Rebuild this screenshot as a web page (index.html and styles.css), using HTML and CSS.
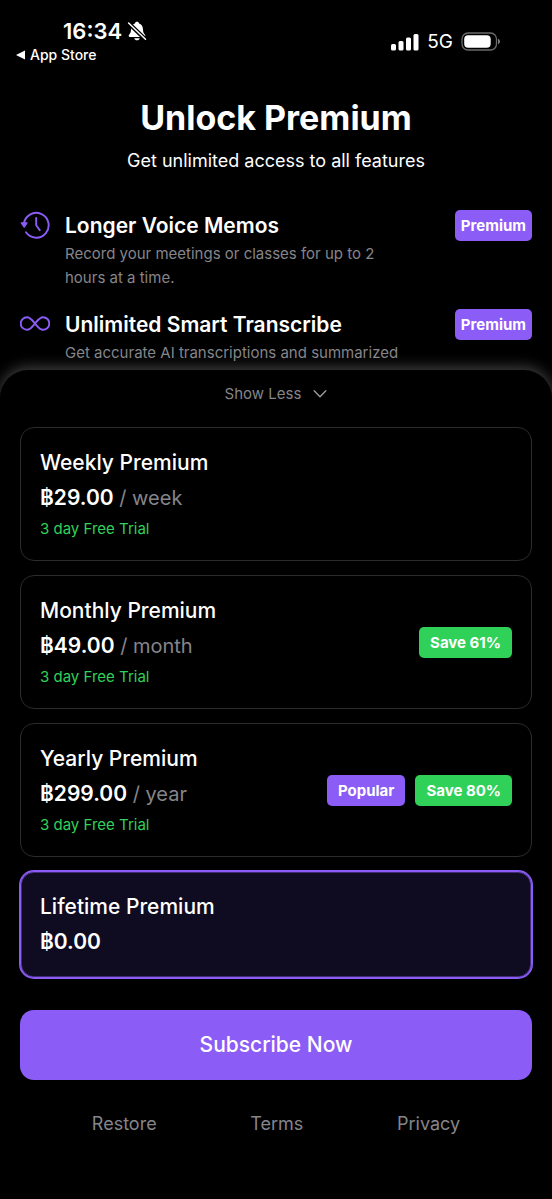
FILE: index.html
```html
<!DOCTYPE html>
<html lang="en">
<head>
<meta charset="utf-8">
<meta name="viewport" content="width=device-width, initial-scale=1">
<title>Unlock Premium</title>
<link rel="stylesheet" href="styles.css">
</head>
<body>
<div class="app">
  <header class="status">
    <div class="status-left">
      <div class="clock">
        <span>16:34</span>
        <svg class="bell" viewBox="0 0 20 20" aria-hidden="true">
          <path fill="#fff" d="M10 .8c1.1 0 1.9.7 2.1 1.6 2.4.8 3.7 2.8 3.8 5.4.1 3.300.7 4.400 2 5.900.9 1.100.4 2.200-.9 2.200H3c-1.300 0-1.800-1.100-.9-2.200 1.300-1.500 1.900-2.600 2-5.900.1-2.600 1.400-4.600 3.800-5.400C8.100 1.500 8.900.8 10 .8zM7.300 17.200h5.400c-.3 1.300-1.300 2.100-2.700 2.100s-2.400-.8-2.700-2.100z"/>
          <path stroke="#000" stroke-width="4.200" d="M1.200 1.700l17.400 16.800"/>
          <path stroke="#fff" stroke-width="1.500" stroke-linecap="round" d="M1.600 2l16.900 16.200"/>
        </svg>
      </div>
      <a class="back" href="#">
        <svg class="back-arrow" viewBox="0 0 9 10" aria-hidden="true"><path fill="#fff" d="M9 .4v9.200L0 5z"/></svg>
        App Store
      </a>
    </div>
    <div class="status-right">
      <svg class="signal" viewBox="0 0 28 18" aria-hidden="true">
        <g fill="#fff"><rect x="0" y="11" width="5" height="6.500" rx="1.500"/><rect x="7.500" y="8" width="5" height="9.500" rx="1.500"/><rect x="15" y="4.500" width="5" height="13" rx="1.500"/><rect x="22.500" y="1" width="5" height="16.500" rx="1.500"/></g>
      </svg>
      <span class="network">5G</span>
      <svg class="battery" viewBox="0 0 40 20" aria-hidden="true">
        <rect x="1" y="1" width="34.500" height="17" rx="6" fill="none" stroke="#6b6b6b" stroke-width="1.300"/>
        <rect x="3.200" y="3.200" width="26.500" height="12.600" rx="4" fill="#fff"/>
        <path fill="#7a7a7a" d="M37 6.700c1.400.6 2 1.600 2 2.800s-.6 2.200-2 2.800z"/>
      </svg>
    </div>
  </header>

  <main class="main">
    <div class="intro">
      <h1 class="title">Unlock Premium</h1>
      <p class="subtitle">Get unlimited access to all features</p>
    </div>

    <ul class="features">
      <li class="feature">
        <svg class="feature-icon" viewBox="0 0 30 30" aria-hidden="true">
          <g fill="none" stroke="#8b5cf6" stroke-width="1.900" stroke-linecap="round" stroke-linejoin="round">
            <path d="M3.900 14A12.400 12.400 0 1 1 6 22.300"/>
            <path d="M16.200 8v7.200l3.600 5"/>
          </g>
          <path fill="#8b5cf6" stroke="#8b5cf6" stroke-linejoin="round" d="M.9 12.800h6.400L4.200 17.600z"/>
        </svg>
        <div class="feature-text">
          <h2 class="feature-name">Longer Voice Memos</h2>
          <p class="feature-note">Record your meetings or classes for up to 2 hours at a time.</p>
        </div>
        <span class="badge badge-feature">Premium</span>
      </li>
      <li class="feature">
        <svg class="feature-icon" viewBox="0 0 30 30" aria-hidden="true">
          <path fill="none" stroke="#8b5cf6" stroke-width="1.900" d="M15 14.500c-2.900-3.500-4.800-6.300-8-6.300a6.300 6.300 0 0 0 0 12.600c3.200 0 5.100-2.800 8-6.300s4.800-6.300 8-6.300a6.300 6.300 0 0 1 0 12.600c-3.200 0-5.100-2.800-8-6.300z"/>
        </svg>
        <div class="feature-text">
          <h2 class="feature-name">Unlimited Smart Transcribe</h2>
          <p class="feature-note">Get accurate AI transcriptions and summarized</p>
        </div>
        <span class="badge badge-feature">Premium</span>
      </li>
    </ul>
  </main>

  <form class="sheet">
    <button class="toggle" type="button">
      Show Less
      <svg class="chevron" viewBox="0 0 14 10" aria-hidden="true"><path fill="none" stroke="#98989f" stroke-width="1.400" stroke-linecap="round" stroke-linejoin="round" d="M1.200 1.800L7 7.800l5.800-6"/></svg>
    </button>

    <div class="plans">
      <label class="plan">
        <input class="plan-radio" type="radio" name="plan" value="weekly">
        <span class="plan-info">
          <span class="plan-name">Weekly Premium</span>
          <span class="plan-price"><b>฿29.00</b> / week</span>
          <span class="plan-trial">3 day Free Trial</span>
        </span>
      </label>
      <label class="plan">
        <input class="plan-radio" type="radio" name="plan" value="monthly">
        <span class="plan-info">
          <span class="plan-name">Monthly Premium</span>
          <span class="plan-price"><b>฿49.00</b> / month</span>
          <span class="plan-trial">3 day Free Trial</span>
        </span>
        <span class="badge badge-save">Save 61%</span>
      </label>
      <label class="plan">
        <input class="plan-radio" type="radio" name="plan" value="yearly">
        <span class="plan-info">
          <span class="plan-name">Yearly Premium</span>
          <span class="plan-price"><b>฿299.00</b> / year</span>
          <span class="plan-trial">3 day Free Trial</span>
        </span>
        <span class="badge">Popular</span>
        <span class="badge badge-save">Save 80%</span>
      </label>
      <label class="plan">
        <input class="plan-radio" type="radio" name="plan" value="lifetime" checked>
        <span class="plan-info">
          <span class="plan-name">Lifetime Premium</span>
          <span class="plan-price"><b>฿0.00</b></span>
        </span>
      </label>
    </div>

    <div class="actions">
      <button class="subscribe" type="submit">Subscribe Now</button>
      <nav class="links">
        <a href="#">Restore</a>
        <a href="#">Terms</a>
        <a href="#">Privacy</a>
      </nav>
    </div>
  </form>
</div>
</body>
</html>
```
FILE: styles.css
```css
* {
  box-sizing: border-box;
}

body {
  margin: 0;
  background: #000;
  color: #fff;
  font-family: Inter, "Liberation Sans", sans-serif;
}

h1, h2, p, ul {
  margin: 0;
  padding: 0;
}

ul {
  list-style: none;
}

a {
  color: inherit;
  text-decoration: none;
}

button {
  padding: 0;
  border: 0;
  font-family: inherit;
  cursor: pointer;
}

svg {
  display: block;
  flex: none;
}

.app {
  display: flex;
  flex-direction: column;
  height: 100vh;
}

/* Status bar */
.status {
  display: flex;
  justify-content: space-between;
  padding: 18px 51px 0 16px;
}

.clock {
  display: flex;
  align-items: center;
  gap: 5px;
  padding-left: 47px;
  font-size: 22px;
  font-weight: 600;
  line-height: 26px;
}

.bell {
  width: 20px;
  height: 20px;
}

.back {
  display: flex;
  align-items: center;
  gap: 5px;
  font-size: 14px;
  font-weight: 500;
  line-height: 22px;
}

.back-arrow {
  width: 9px;
  height: 10px;
}

.status-right {
  display: flex;
  align-items: center;
  gap: 8px;
}

.signal {
  width: 28px;
  height: 18px;
}

.network {
  font-size: 19px;
  line-height: 24px;
}

.battery {
  width: 40px;
  height: 20px;
}

/* Features */
.main {
  flex: 1 1 0;
  min-height: 0;
  overflow: hidden;
  padding: 30px 20px 0;
}

.intro {
  text-align: center;
}

.title {
  font-size: 34px;
  font-weight: 700;
  line-height: 44px;
}

.subtitle {
  padding-top: 8px;
  font-size: 18px;
  line-height: 26px;
}

.features {
  display: grid;
  gap: 19px;
  padding-top: 36px;
}

.feature {
  display: flex;
  align-items: flex-start;
  gap: 15px;
}

.feature-icon {
  width: 30px;
  height: 30px;
}

.feature-text {
  flex: 1;
  min-width: 0;
}

.feature-name {
  font-size: 21px;
  font-weight: 600;
  line-height: 32px;
}

.feature-note {
  padding-right: 30px;
  color: #85858a;
  font-size: 15px;
  line-height: 24px;
}

.badge {
  flex: none;
  padding: 0 11px;
  border-radius: 5px;
  background: #8b5cf6;
  font-size: 15px;
  font-weight: 700;
  line-height: 31px;
}

.badge-feature {
  padding: 0 6px;
}

.badge-save {
  background: #30d158;
}

/* Plan sheet */
.sheet {
  position: relative;
  flex: none;
  border-radius: 28px 28px 0 0;
  background: #000;
  box-shadow: 0 -3px 14px rgba(255, 255, 255, 0.25);
}

.toggle {
  display: flex;
  align-items: center;
  justify-content: center;
  gap: 12px;
  width: 100%;
  padding: 12px 0 21px;
  background: none;
  color: #85858a;
  font-size: 15px;
  line-height: 24px;
}

.chevron {
  width: 14px;
  height: 10px;
}

.plans {
  display: grid;
  gap: 14px;
  padding: 0 20px;
}

.plan {
  display: flex;
  align-items: center;
  gap: 10px;
  padding: 20px 19px;
  border: 1px solid #2c2c2e;
  border-radius: 14px;
  cursor: pointer;
}

.plan:has(:checked) {
  border-color: #8b5cf6;
  background: #0f0c22;
  box-shadow: 0 0 0 1px #8b5cf6, inset 0 0 0 1px rgba(139, 92, 246, 0.4);
}

.plan-radio {
  position: absolute;
  opacity: 0;
}

.plan-info {
  display: grid;
  flex: 1;
  gap: 5px;
}

.plan-name {
  font-size: 21px;
  font-weight: 500;
  line-height: 30px;
}

.plan-price {
  color: #85858a;
  font-size: 20px;
  line-height: 30px;
}

.plan-price b {
  color: #fff;
  font-size: 21px;
  font-weight: 600;
}

.plan-trial {
  color: #30d158;
  font-size: 15px;
  line-height: 22px;
}

/* Footer */
.actions {
  margin-top: 3px;
  padding: 29px 20px 62px;
}

.subscribe {
  width: 100%;
  border-radius: 14px;
  background: #8b5cf6;
  color: #fff;
  font-size: 21px;
  font-weight: 500;
  line-height: 70px;
}

.links {
  display: flex;
  justify-content: space-around;
  padding: 31px 25px 0;
  color: #85858a;
  font-size: 18px;
  line-height: 26px;
}
```
